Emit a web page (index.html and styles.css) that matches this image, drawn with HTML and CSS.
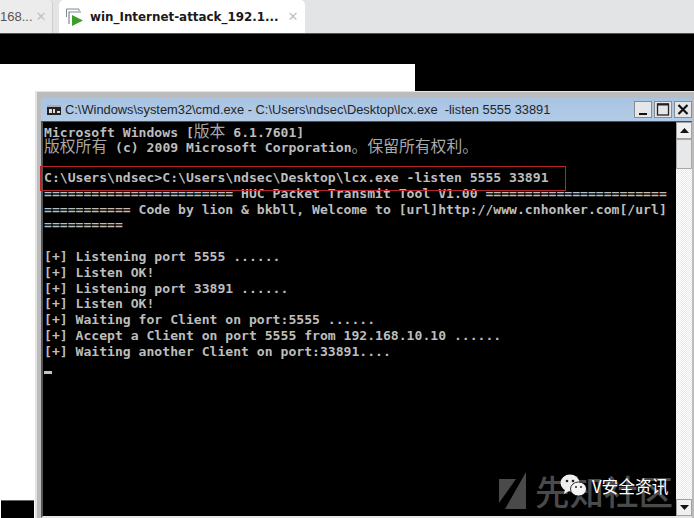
FILE: index.html
```html
<!DOCTYPE html>
<html lang="en">
<head>
<meta charset="utf-8">
<title>cmd</title>
<link rel="stylesheet" href="styles.css">
</head>
<body>
<div class="shot">
  <header class="tabbar">
    <div class="tab tab-prev"><span class="tab-label">168...</span><span class="tab-x">✕</span></div>
    <div class="tab tab-active">
      <svg class="vm-icon" width="20" height="20" viewBox="0 0 20 20">
        <path d="M4 17V5h12" fill="none" stroke="#7e8a93" stroke-width="1.200"/>
        <path d="M1.500 10V2H14V4" fill="none" stroke="#7e8a93" stroke-width="1"/>
        <path d="M7 8V19l11-5.500z" fill="#3e9e2c"/>
      </svg>
      <span class="tab-title">win_Internet-attack_192.1...</span>
      <span class="tab-x">✕</span>
    </div>
  </header>
  <div class="band"></div>
  <main class="stage">
    <div class="panel"></div>
    <div class="corner"></div>
    <section class="window">
      <div class="titlebar">
        <svg class="cmd-icon" width="14" height="10" viewBox="0 0 14 10">
          <rect width="14" height="10" fill="#222"/>
          <rect y="0" width="14" height="2" fill="#aab"/>
          <rect x="2" y="4" width="3" height="4" fill="#ddd"/>
          <rect x="6" y="4" width="2" height="4" fill="#ddd"/>
          <rect x="10" y="6" width="3" height="2" fill="#ddd"/>
        </svg>
        <span class="title-text">C:\Windows\system32\cmd.exe - C:\Users\ndsec\Desktop\lcx.exe&nbsp; -listen 5555 33891</span>
        <div class="controls">
          <button class="ctl"><svg width="16" height="15" viewBox="0 0 16 15"><rect x="4" y="11" width="8" height="2" fill="#111"/></svg></button>
          <button class="ctl"><svg width="16" height="15" viewBox="0 0 16 15"><rect x="2.500" y="2" width="11" height="11" fill="none" stroke="#222" stroke-width="1.300"/><rect x="2" y="1.500" width="12" height="2" fill="#222"/></svg></button>
          <button class="ctl"><svg width="16" height="15" viewBox="0 0 16 15"><path d="M3.500 3l9 9M12.500 3l-9 9" stroke="#111" stroke-width="2.200"/></svg></button>
        </div>
      </div>
      <div class="body">
        <div class="console">
          <div class="l">Microsoft Windows [<span class="cjk">版本</span> 6.1.7601]</div>
          <div class="l"><span class="cjk">版权所有</span> (c) 2009 Microsoft Corporation<span class="cjk">。保留所有权利。</span></div>
          <div class="l"> </div>
          <div class="l">C:\Users\ndsec&gt;C:\Users\ndsec\Desktop\lcx.exe -listen 5555 33891</div>
          <div class="l">======================== HUC Packet Transmit Tool V1.00 =======================</div>
          <div class="l">=========== Code by lion &amp; bkbll, Welcome to [url]http://www.cnhonker.com[/url]</div>
          <div class="l">==========</div>
          <div class="l"> </div>
          <div class="l">[+] Listening port 5555 ......</div>
          <div class="l">[+] Listen OK!</div>
          <div class="l">[+] Listening port 33891 ......</div>
          <div class="l">[+] Listen OK!</div>
          <div class="l">[+] Waiting for Client on port:5555 ......</div>
          <div class="l">[+] Accept a Client on port 5555 from 192.168.10.10 ......</div>
          <div class="l">[+] Waiting another Client on port:33891....</div>
          <div class="l"> </div>
          <div class="cursor"></div>
        </div>
        <div class="scrollbar">
          <div class="sb-btn"><svg width="9" height="5" viewBox="0 0 9 5"><path d="M4.500 0L9 5H0z" fill="#111"/></svg></div>
          <div class="sb-thumb"></div>
          <div class="sb-track"></div>
          <div class="sb-btn"><svg width="9" height="5" viewBox="0 0 9 5"><path d="M4.500 5L9 0H0z" fill="#111"/></svg></div>
        </div>
      </div>
    </section>
    <div class="highlight"></div>
    <div class="watermark">
      <svg class="wm-logo" width="28" height="39" viewBox="0 0 28 39"><path d="M0 8H17L0 32zM27 1V38H6z" fill="#4a4a4a"/></svg>
      <span class="wm-text">先知社区</span>
    </div>
    <div class="account">
      <svg class="wechat" width="28" height="24" viewBox="0 0 28 24">
        <ellipse cx="10" cy="9" rx="9.500" ry="8.500" fill="#eee"/>
        <path d="M5 15l-1 5 5-3z" fill="#eee"/>
        <ellipse cx="18.500" cy="15" rx="8" ry="7" fill="#f4f4f4" stroke="#000" stroke-width=".8"/>
        <circle cx="7" cy="7" r="1.300" fill="#222"/><circle cx="13" cy="7" r="1.300" fill="#222"/>
        <circle cx="16" cy="13" r="1.100" fill="#333"/><circle cx="21" cy="13" r="1.100" fill="#333"/>
      </svg>
      <span class="account-name">V安全资讯</span>
    </div>
  </main>
</div>
</body>
</html>
```

FILE: styles.css
```css
* { box-sizing: border-box; }
html, body { margin: 0; padding: 0; background: #000; }
.shot {
  width: 694px;
  height: 518px;
  overflow: hidden;
  display: flex;
  flex-direction: column;
  font-family: "Liberation Sans", Arial, sans-serif;
}
.tabbar {
  height: 34px;
  flex: none;
  display: flex;
  background: #e3e4e6;
  border-bottom: 1px solid #555;
}
.tab {
  height: 33px;
  display: flex;
  align-items: center;
}
.tab-prev {
  width: 53px;
  background: #ececed;
  border-right: 1px solid #cfcfd0;
  border-top-right-radius: 4px;
  color: #555;
  font-size: 13px;
}
.tab-prev .tab-x { margin-left: 3px; }
.tab-x { color: #c2c2c2; font-size: 13px; font-family: "DejaVu Sans", sans-serif; }
.tab-active {
  width: 246px;
  margin-left: 6px;
  background: #fff;
  border-radius: 5px 5px 0 0;
  padding-left: 6px;
}
.vm-icon { flex: none; }
.tab-title {
  margin-left: 5px;
  font-family: "DejaVu Sans", sans-serif;
  font-weight: 700;
  font-size: 11.900px;
  color: #1a1a1a;
  white-space: nowrap;
}
.tab-active .tab-x { margin-left: 9px; }
.band { height: 30px; flex: none; background: #000; }
.stage { position: relative; flex: 1; background: #000; }
.panel {
  position: absolute;
  left: 0; top: 0;
  width: 415px;
  height: 27px;
  background: #fff;
}
.corner {
  position: absolute;
  left: 0; top: 27px;
  width: 36px;
  height: 427px;
  background: #fff;
}
.corner::after {
  content: "";
  position: absolute;
  left: 1px; right: 2px; bottom: 0;
  top: 409px;
  background: #000;
  border-top: 1px solid #666;
}
.window {
  position: absolute;
  left: 35px; top: 27px;
  width: 659px;
  height: 427px;
  background: #bcbcbc;
  border-top: 1px solid #e6e6e6;
  border-left: 2px solid #e4e4e4;
  padding: 6px 2px 0 4px;
  display: flex;
  flex-direction: column;
}
.titlebar {
  height: 24px;
  flex: none;
  display: flex;
  align-items: center;
  background: linear-gradient(#a8c4e2, #b3cbe6);
  border-bottom: 1px solid #4a4f55;
  padding-left: 6px;
}
.cmd-icon { flex: none; }
.title-text {
  margin-left: 4px;
  padding-bottom: 1px;
  font-size: 12.850px;
  color: #20262e;
  white-space: nowrap;
  flex: 1;
}
.controls { display: flex; gap: 2px; }
.ctl {
  width: 18px;
  height: 17px;
  padding: 0;
  border: 1px solid #8b8b8b;
  background: #e4e6e9;
  display: flex;
  align-items: center;
  justify-content: center;
  overflow: hidden;
}
.body {
  flex: 1;
  min-height: 0;
  display: flex;
  background: #000;
  border-left: 2px solid #555;
  border-bottom: 2px solid #e6e6e6;
}
.console {
  flex: 1;
  min-width: 0;
  overflow: hidden;
  padding: 0.700px 0 0 1px;
  color: #bdbdbd;
  font-family: "DejaVu Sans Mono", monospace;
  font-weight: 700;
  font-size: 13.100px;
  line-height: 15.800px;
}
.l { height: 15.800px; white-space: pre; }
.cjk {
  font-family: "Noto Sans CJK SC", sans-serif;
  font-weight: 400;
  font-size: 15.800px;
  line-height: 15px;
  color: #a8a8a8;
}
.cursor {
  width: 8px;
  height: 3px;
  margin-top: -4px;
  background: #c4c4c4;
}
.scrollbar {
  width: 16px;
  flex: none;
  display: flex;
  flex-direction: column;
  background: #eee;
}
.sb-btn {
  height: 17px;
  flex: none;
  background: #eff0f1;
  border: 1px solid #a0a0a0;
  display: flex;
  align-items: center;
  justify-content: center;
}
.sb-thumb {
  height: 30px;
  flex: none;
  background: #e7e8ea;
  border: 1px solid #a8a8a8;
}
.sb-track {
  flex: 1;
  background: repeating-conic-gradient(#fff 0 25%, #e8e8e8 0 50%) 0 0 / 2px 2px;
}
.highlight {
  position: absolute;
  left: 40px; top: 102px;
  width: 526px;
  height: 25px;
  border: 1px solid #b8262b;
  pointer-events: none;
}
.watermark {
  position: absolute;
  left: 499px; top: 407px;
  display: flex;
  align-items: center;
  pointer-events: none;
}
.wm-logo { flex: none; }
.wm-text {
  margin-left: 8px;
  font-family: "Noto Sans CJK SC", sans-serif;
  font-weight: 500;
  font-size: 34.500px;
  line-height: 39px;
  color: #4a4a4a;
  white-space: nowrap;
}
.account {
  position: absolute;
  left: 560px; top: 410px;
  display: flex;
  align-items: center;
}
.wechat { flex: none; }
.account-name {
  margin-left: 4px;
  font-family: "Noto Sans CJK SC", sans-serif;
  font-size: 16.700px;
  line-height: 24px;
  color: #fff;
  white-space: nowrap;
}
```
